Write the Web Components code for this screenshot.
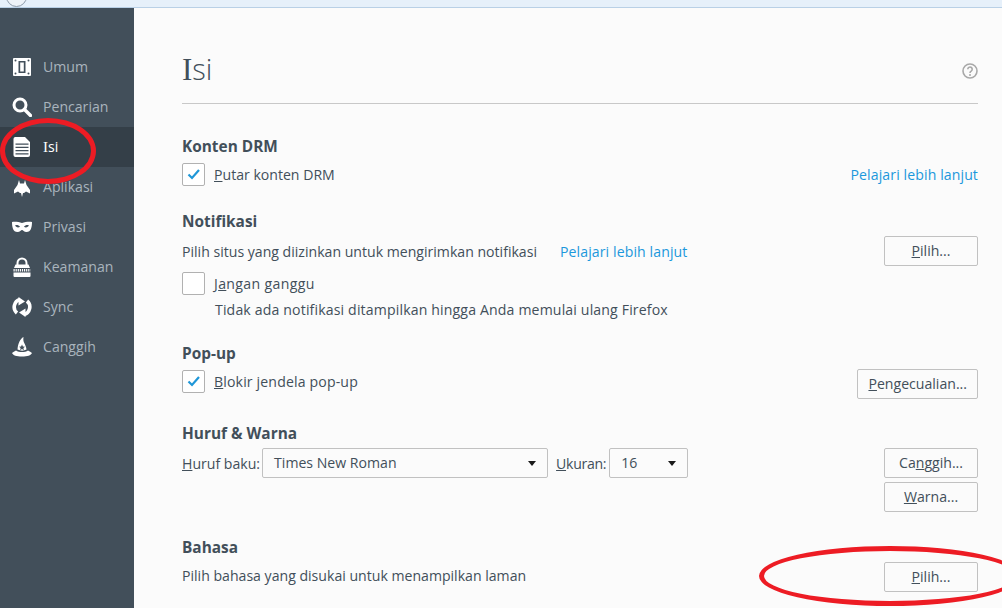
<!DOCTYPE html>
<html>
<head>
<meta charset="utf-8">
<style>
html, body { margin: 0; height: 100%; overflow: hidden; background: #fbfbfb; }
body { font: 14.1px "Open Sans", sans-serif; color: #424f5a; }
</style>
</head>
<body>
<pref-app>
  <pref-nav slot="nav">
    <pref-nav-item>Umum<svg slot="icon" viewBox="0 0 20 20"><path fill="#fff" d="M2 1h16a1 1 0 0 1 1 1v16a1 1 0 0 1-1 1H2a1 1 0 0 1-1-1V2a1 1 0 0 1 1-1z"/><path fill="#424f5a" fill-rule="evenodd" d="M6.500 4h7v12h-7zM8.200 5.500v9h3.600v-9z"/><circle cx="3.500" cy="3.500" r="1" fill="#424f5a"/><circle cx="16.500" cy="3.500" r="1" fill="#424f5a"/><circle cx="3.500" cy="16.500" r="1" fill="#424f5a"/><circle cx="16.500" cy="16.500" r="1" fill="#424f5a"/></svg></pref-nav-item>
    <pref-nav-item>Pencarian<svg slot="icon" viewBox="0 0 20 20"><circle cx="8" cy="8" r="6" fill="none" stroke="#fff" stroke-width="3"/><path d="M12.500 12.500l6 6" stroke="#fff" stroke-width="3.400" stroke-linecap="round"/></svg></pref-nav-item>
    <pref-nav-item selected><span style="font-family:'Liberation Serif',serif;font-size:15px">I</span>si<svg slot="icon" viewBox="0 0 20 20"><path fill="#fff" d="M3 0h10l5 5v13a2 2 0 0 1-2 2H3a2 2 0 0 1-1.500-2V2A2 2 0 0 1 3 0z"/><path fill="#424f5a" d="M3.500 6.500h13v1.300h-13zM3.500 9.800h13v1.300h-13zM3.500 13h13v1.300h-13zM3.500 16.200h13v1.300h-13z"/></svg></pref-nav-item>
    <pref-nav-item>Aplikasi<svg slot="icon" viewBox="0 0 20 20"><path fill="#fff" d="M7 3l1 3.500h4L13 3l1.500 5L18 13v3.500l-4-2-2 1.500h-1l-1 4-1-4H8l-2-1.500-4 2V13l3.500-5z"/></svg></pref-nav-item>
    <pref-nav-item>Privasi<svg slot="icon" viewBox="0 0 20 20"><path fill="#fff" fill-rule="evenodd" d="M0 5c3-.5 7 0 10 1 3-1 7-1.500 10-1 0 5-1 10-5.500 10-2.500 0-3.500-2-4.500-2s-2 2-4.500 2C1 15 0 10 0 5zm3.200 3.300c.5 2 3 2.700 4.800 1.500-1-1.500-3.200-2.200-4.800-1.500zm13.600 0c-1.600-.7-3.800 0-4.800 1.500 1.800 1.200 4.300.5 4.800-1.500z"/></svg></pref-nav-item>
    <pref-nav-item>Keamanan<svg slot="icon" viewBox="0 0 20 20"><path fill="none" stroke="#fff" stroke-width="2" d="M5.500 8V6a4.500 4.500 0 0 1 9 0v2"/><path fill="#fff" d="M3.500 7.500h13L18 11H2zM1.500 15.500h17V19a1 1 0 0 1-1 1h-15a1 1 0 0 1-1-1z"/><path stroke="#fff" stroke-width="2.500" stroke-dasharray="1.200 .9" d="M1.500 13.200h17"/></svg></pref-nav-item>
    <pref-nav-item>Sync<svg slot="icon" viewBox="0 0 20 20"><path fill="none" stroke="#fff" stroke-width="3.600" d="M8 2.500A7.800 7.800 0 0 0 5 16M12 17.500A7.800 7.800 0 0 0 15 4"/><path fill="#fff" d="M6.500 0l6.500 4.500-6.500 4zM13.500 20L7 15.500l6.500-4z"/></svg></pref-nav-item>
    <pref-nav-item>Canggih<svg slot="icon" viewBox="0 0 20 20"><path fill="#fff" d="M11.500 0C8 2 6 6.500 5.500 12.500c3 1.500 6.500 1.500 9 0-.3-3-1.500-5-2.500-7-.7-1.500-.8-3.500-.5-5.500zM4 13.500C2.500 14.200 1 15 0 16c1 2.500 4.500 3.500 10 3.500S19 18.500 20 16c-1-1-2.500-1.800-4-2.500-3 2-9 2-12 0z"/><path fill="#424f5a" d="M10 7.500l.9 2 2.100.2-1.600 1.400.5 2.100-1.900-1.100-1.900 1.100.5-2.100L7 9.700l2.100-.2z"/></svg></pref-nav-item>
  </pref-nav>

  <pref-header><span style="font-family:'Liberation Serif',serif;font-size:31px;font-weight:400">I</span>si</pref-header>

  <pref-section heading="Konten DRM" style="--top:33px">
    <pref-row>
      <pref-check checked><u>P</u>utar konten DRM</pref-check>
      <pref-link slot="end">Pelajari lebih lanjut</pref-link>
    </pref-row>
  </pref-section>

  <pref-section heading="Notifikasi" style="--top:26px">
    <pref-row style="--row-h:30px;margin-top:-2px">
      <span>Pilih situs yang diizinkan untuk mengirimkan notifikasi</span>
      <pref-link style="margin-left:23px">Pelajari lebih lanjut</pref-link>
      <pref-btn slot="end"><u>P</u>ilih...</pref-btn>
    </pref-row>
    <pref-row style="margin-top:6px"><pref-check style="letter-spacing:.35px">J<u>a</u>ngan ganggu</pref-check></pref-row>
    <pref-note>Tidak ada notifikasi ditampilkan hingga Anda memulai ulang Firefox</pref-note>
  </pref-section>

  <pref-section heading="Pop-up" style="--top:24px">
    <pref-row style="align-items:flex-start">
      <pref-check checked style="letter-spacing:.15px"><u>B</u>lokir jendela pop-up</pref-check>
      <pref-btn slot="end" style="margin-top:-1px"><u>P</u>engecualian...</pref-btn>
    </pref-row>
  </pref-section>

  <pref-section heading="Huruf &amp; Warna" style="--top:25px">
    <pref-row style="align-items:flex-start;margin-top:-2px;line-height:32px">
      <span><u>H</u>uruf baku:</span>
      <pref-select style="width:286px;margin-left:2px">Times New Roman</pref-select>
      <span style="margin-left:8px;letter-spacing:-.3px"><u>U</u>kuran:</span>
      <pref-select style="width:79px;margin-left:3px">16</pref-select>
      <pref-stack slot="end">
        <pref-btn>Ca<u>n</u>ggih...</pref-btn>
        <pref-btn><u>W</u>arna...</pref-btn>
      </pref-stack>
    </pref-row>
  </pref-section>

  <pref-section heading="Bahasa" style="--top:26px">
    <pref-row style="margin-top:-2px;line-height:28px;align-items:flex-start">
      <span>Pilih bahasa yang disukai untuk menampilkan laman</span>
      <pref-btn slot="end"><u>P</u>ilih...</pref-btn>
    </pref-row>
  </pref-section>

  <red-ring style="left:0;top:118px;width:96px;height:66px"></red-ring>
  <red-ring style="left:759px;top:546px;width:262px;height:60px"></red-ring>
</pref-app>

<script>
function define(name, css, html, setup) {
    customElements.define(name, class extends HTMLElement {
        constructor() {
            super();
            this.attachShadow({ mode: 'open' });
            this.shadowRoot.innerHTML = `<style>${css}</style>${html}`;
        }
        connectedCallback() {
            if (setup) setup(this);
        }
    });
}

define('pref-app', `
    :host { display: block; height: 608px; position: relative; overflow: hidden; }
    #top { height: 8px; box-sizing: border-box; background: #e6f0fa; border-bottom: 1px solid #b9d0e6; position: relative; overflow: hidden; }
    #top i { position: absolute; left: 6px; top: -14px; width: 19px; height: 19px; border: 1px solid #8b99a8; border-radius: 50%; background: #eef3f8; }
    #main { display: flex; height: 600px; }
    #nav { width: 134px; flex: none; background: #424f5a; }
    #content { flex: 1; padding: 0 24px 0 48px; min-width: 0; background: #fbfbfb; }
`, `
    <div id="top"><i></i></div>
    <div id="main">
        <div id="nav"><slot name="nav"></slot></div>
        <div id="content"><slot></slot></div>
    </div>
`);

define('pref-nav', `:host { display: block; padding-top: 39px; }`, `<slot></slot>`);

define('pref-nav-item', `
    :host { display: flex; align-items: center; height: 40px; padding-left: 12px; color: #a9b4bd; font-size: 14.100px; }
    :host([selected]) { background: #343f48; color: #fff; }
    #ic { width: 20px; height: 20px; margin-right: 11px; }
    #t { padding-bottom: 2px; }
    ::slotted(svg) { display: block; width: 20px; height: 20px; }
`, `<div id="ic"><slot name="icon"></slot></div><span id="t"><slot></slot></span>`);

define('pref-header', `
    :host { display: flex; justify-content: space-between; align-items: center; height: 96px; box-sizing: border-box; border-bottom: 1px solid #c8c8c8; padding-top: 26px; }
    h1 { margin: 0; font: 300 29px "Open Sans", sans-serif; color: #424f5a; }
    svg { width: 16px; height: 16px; margin-top: 4px; }
`, `
    <h1><slot></slot></h1>
    <svg viewBox="0 0 16 16"><circle cx="8" cy="8" r="7" fill="none" stroke="#a8a8a8" stroke-width="1.600"/><path d="M5.800 6.300a2.200 2.200 0 1 1 3.400 1.800c-.8.500-1.200 1-1.200 1.800" fill="none" stroke="#a8a8a8" stroke-width="1.600"/><circle cx="8" cy="12" r="1" fill="#a8a8a8"/></svg>
`);

define('pref-section', `
    :host { display: block; padding-top: var(--top, 24px); }
    h2 { margin: 0; font: 700 15.400px/20px "Open Sans", sans-serif; color: #424f5a; padding-bottom: 6px; }
`, `<h2 id="h"></h2><slot></slot>`, el => {
    el.shadowRoot.getElementById('h').textContent = el.getAttribute('heading');
});

define('pref-row', `
    :host { display: flex; align-items: center; min-height: var(--row-h, 22px); }
    #end { margin-left: auto; display: flex; }
`, `<slot></slot><div id="end"><slot name="end"></slot></div>`);

define('pref-check', `
    :host { display: inline-flex; align-items: center; }
    #b { width: 21px; height: 21px; border: 1px solid #b1b1b1; border-radius: 2px; background: #fff; margin-right: 9px; display: flex; align-items: center; justify-content: center; }
    svg { display: none; width: 13px; height: 11px; }
    :host([checked]) svg { display: block; }
`, `
    <div id="b"><svg viewBox="0 0 13 11"><path d="M1.500 5.500l3.500 3.500 7-8" fill="none" stroke="#1f97d8" stroke-width="2.200"/></svg></div>
    <span><slot></slot></span>
`);

define('pref-link', `:host { color: #1b98dc; letter-spacing: .1px; }`, `<slot></slot>`);

define('pref-note', `:host { display: block; padding: 5px 0 0 33px; line-height: 20px; letter-spacing: .15px; }`, `<slot></slot>`);

define('pref-btn', `
    :host { display: inline-flex; align-items: center; justify-content: center; box-sizing: border-box; min-width: 94px; height: 30px; padding: 0 10px; background: #fbfbfb; border: 1px solid #c1c1c1; border-radius: 2px; line-height: 20px; }
`, `<slot></slot>`);

define('pref-stack', `:host { display: flex; flex-direction: column; gap: 4px; }`, `<slot></slot>`);

define('pref-select', `
    :host { display: flex; align-items: center; box-sizing: border-box; height: 30px; padding: 0 11px; background: #fbfbfb; border: 1px solid #c1c1c1; border-radius: 2px; line-height: 20px; letter-spacing: 0; }
    i { margin-left: auto; width: 0; height: 0; border: 4.500px solid transparent; border-top: 5px solid #1a1a1a; border-bottom: 0; }
`, `<slot></slot><i></i>`);

define('red-ring', `
    :host { display: block; position: absolute; box-sizing: border-box; border: 5px solid #ed1c24; border-radius: 50%; }
`, ``);
</script>
</body>
</html>
